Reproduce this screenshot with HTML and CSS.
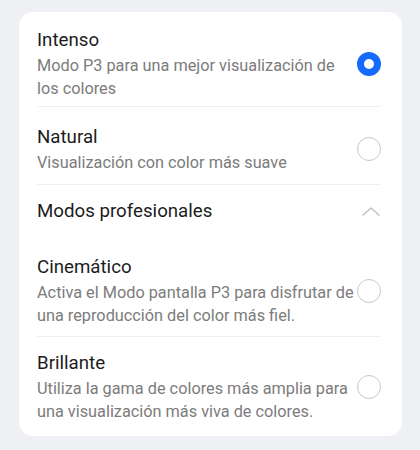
FILE: index.html
```html
<!DOCTYPE html>
<html lang="es">
<head>
<meta charset="utf-8">
<link rel="stylesheet" href="styles.css">
</head>
<body>
<div class="card">
  <div class="row first">
    <div class="text">
      <div class="title">Intenso</div>
      <div class="sub">Modo P3 para una mejor visualización de los colores</div>
    </div>
    <span class="radio checked"></span>
  </div>
  <div class="row second">
    <div class="text">
      <div class="title">Natural</div>
      <div class="sub">Visualización con color más suave</div>
    </div>
    <span class="radio"></span>
  </div>
  <div class="section">
    <div class="section-title">Modos profesionales</div>
    <svg class="chev" width="18" height="9" viewBox="0 0 18 9"><path d="M1 8 L9 1 L17 8" fill="none" stroke="#bdbdbd" stroke-width="1.3" stroke-linecap="round" stroke-linejoin="round"/></svg>
  </div>
  <div class="row pro">
    <div class="text">
      <div class="title">Cinemático</div>
      <div class="sub">Activa el Modo pantalla P3 para disfrutar de una reproducción del color más fiel.</div>
    </div>
    <span class="radio"></span>
  </div>
  <div class="row last">
    <div class="text">
      <div class="title">Brillante</div>
      <div class="sub">Utiliza la gama de colores más amplia para una visualización más viva de colores.</div>
    </div>
    <span class="radio"></span>
  </div>
</div>
</body>
</html>
```
FILE: styles.css
```css
html, body {
  margin: 0;
  padding: 0;
  background: #eef0f4;
  font-family: Roboto, "Noto Sans", sans-serif;
}
.card {
  margin: 12px 18px 0 19px;
  background: #ffffff;
  border-radius: 14px;
  padding: 0 21px 0 18px;
}
.row {
  display: flex;
  align-items: center;
  border-bottom: 1px solid #f0f0f2;
}
.row.first {
  padding: 15px 0 6px 0;
}
.row.second {
  padding: 17px 0 10px 0;
}
.row.pro {
  padding: 16px 0 9px 0;
}
.row.last {
  border-bottom: none;
  padding: 13px 0 13px 0;
}
.text {
  flex: 1;
  min-width: 0;
  padding-right: 2px;
}
.title {
  font-size: 18.7px;
  line-height: 26px;
  color: #1c1c1c;
  margin-bottom: 1px;
}
.sub {
  font-size: 16.3px;
  line-height: 23px;
  color: #7c7c7c;
}
.radio {
  flex: none;
  width: 24px;
  height: 24px;
  box-sizing: border-box;
  border-radius: 50%;
  border: 1.5px solid #c8c8c8;
}
.radio.checked {
  border: 7.5px solid #166bff;
}
.section {
  display: flex;
  align-items: center;
  justify-content: space-between;
  padding: 13px 1px 14px 0;
}
.section-title {
  font-size: 18.7px;
  line-height: 26px;
  color: #1c1c1c;
}
.chev {
  display: block;
}
```
